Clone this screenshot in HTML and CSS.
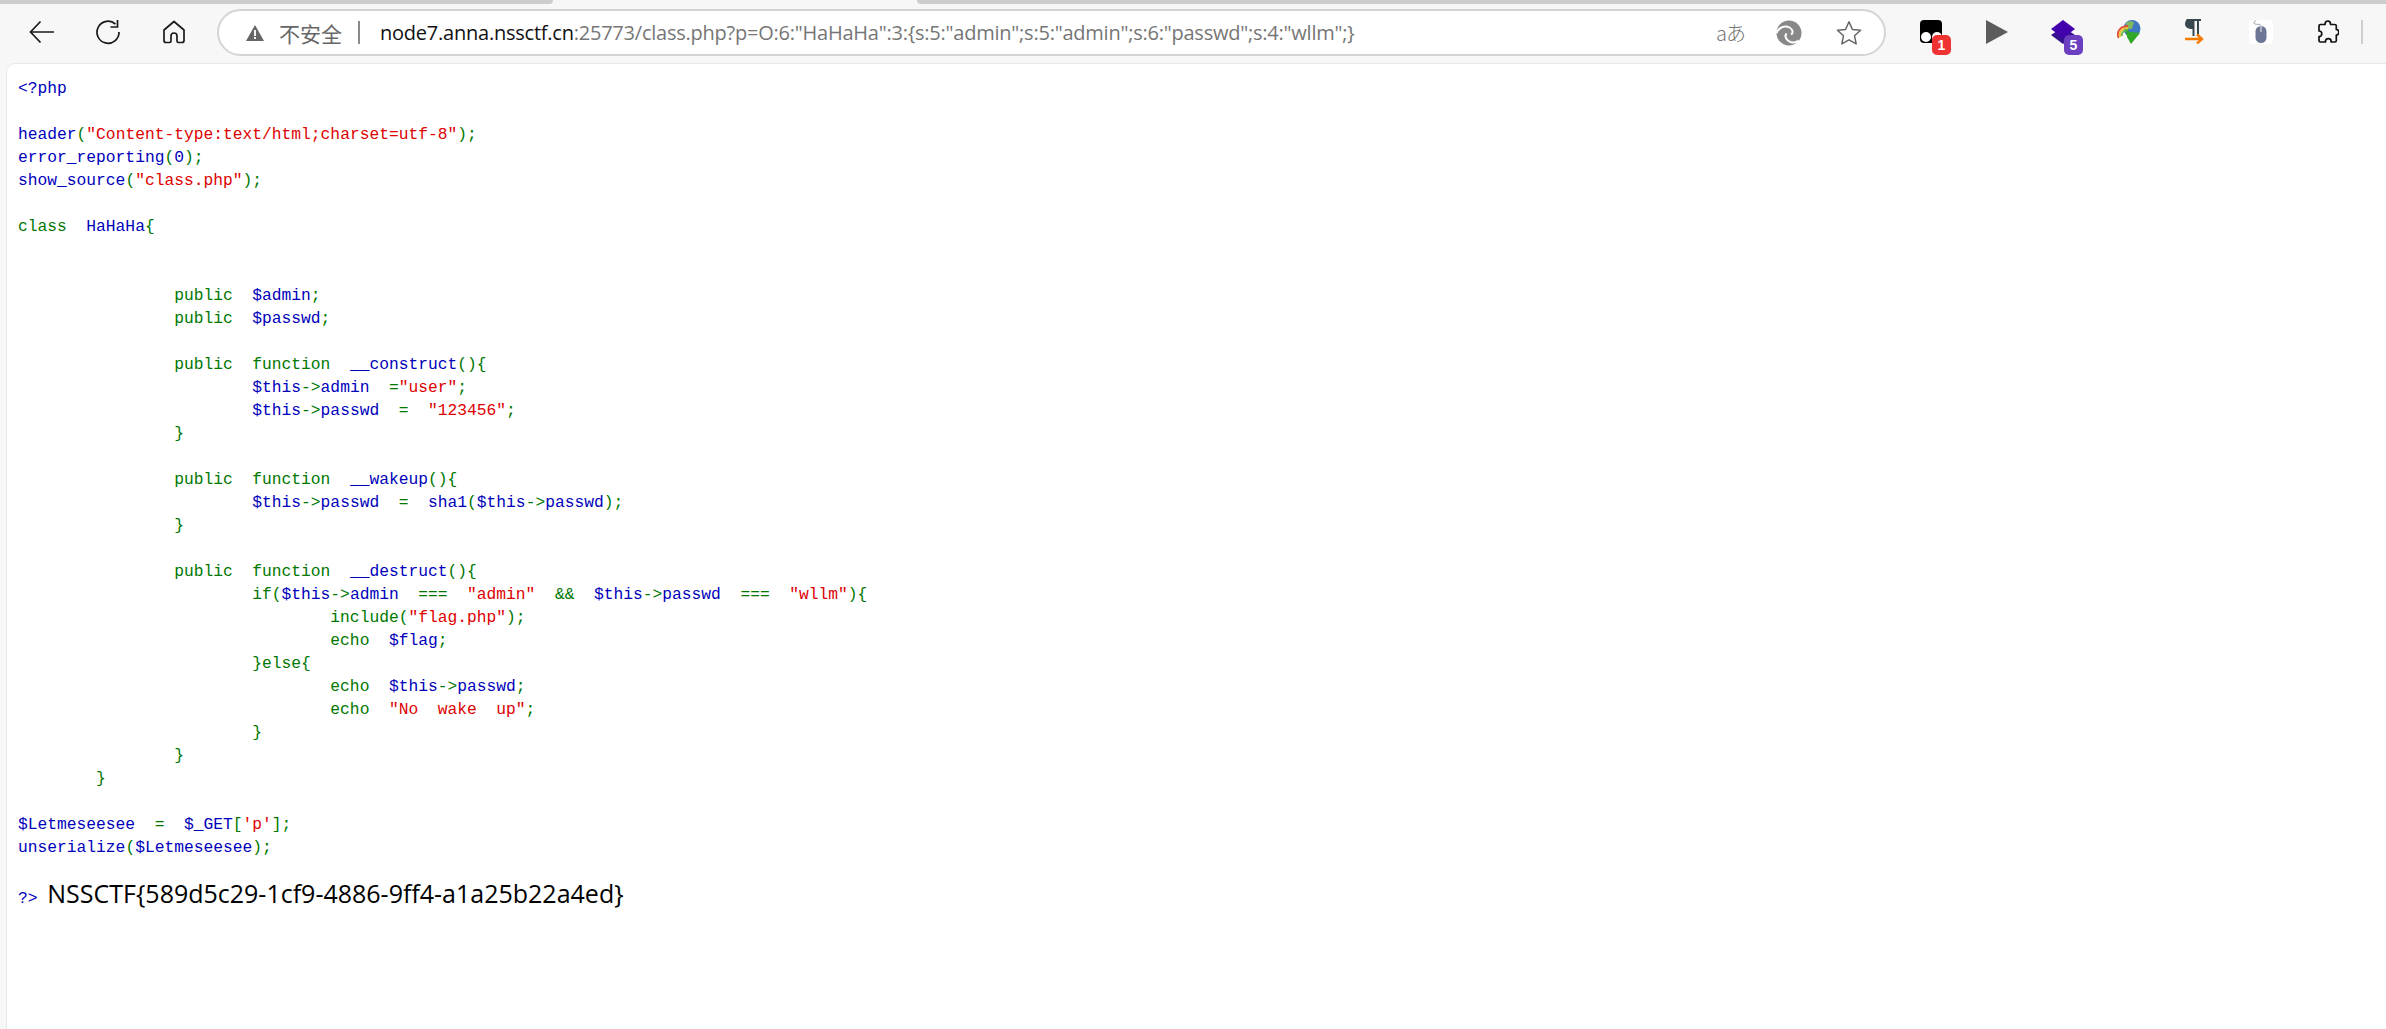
FILE: index.html
```html
<!DOCTYPE html>
<html lang="zh">
<head>
<meta charset="utf-8">
<title>class.php</title>
<link rel="stylesheet" href="styles.css">
</head>
<body>
<div class="tabstrip"><div class="tab-left"></div><div class="tab-active"></div><div class="tab-right"></div></div>
<header class="toolbar">
  <div class="btn"><svg width="26" height="24" viewBox="0 0 26 24"><path d="M25 12H2M11.500 1.500 1.500 12l10 10.500" fill="none" stroke="#1a1a1a" stroke-width="1.700"/></svg></div>
  <div class="btn"><svg width="26" height="26" viewBox="0 0 26 26"><path d="M20.500 5.200A11 11 0 1 0 24 13" fill="none" stroke="#1a1a1a" stroke-width="1.700"/><path d="M22.500 1v7h-7" fill="none" stroke="#1a1a1a" stroke-width="1.700"/></svg></div>
  <div class="btn"><svg width="24" height="24" viewBox="0 0 24 24"><path d="M12 1.500 2 10v10.500a2 2 0 0 0 2 2h3.500a1.500 1.500 0 0 0 1.500-1.500v-5a3 3 0 0 1 6 0v5a1.500 1.500 0 0 0 1.500 1.500H20a2 2 0 0 0 2-2V10z" fill="none" stroke="#1a1a1a" stroke-width="1.700" stroke-linejoin="round"/></svg></div>
  <div class="omnibox">
    <svg class="warn" width="18" height="16" viewBox="0 0 18 16"><path d="M9 0 18 16H0z" fill="#666"/><path d="M8 5h2v6H8zM8 12h2v2H8z" fill="#f4f4f4"/></svg>
    <span class="insecure">不安全</span>
    <span class="divider"></span>
    <span class="url"><span class="host">node7.anna.nssctf.cn</span>:25773/class.php?p=O:6:"HaHaHa":3:{s:5:"admin";s:5:"admin";s:6:"passwd";s:4:"wllm";}</span>
    <div class="omni-actions">
      <span class="translate">aあ</span>
      <svg width="26" height="26" viewBox="0 0 26 26"><circle cx="13" cy="13" r="12.500" fill="#888"/><path d="M.5 13C3 7 9 5 13.500 7.500c3.500 2 4 5.500 1.500 7" fill="none" stroke="#fff" stroke-width="2"/><path d="M10.500 13.500c-2.500 3 0 7 4 8.500 3 1 6 .5 8-1.500" fill="none" stroke="#fff" stroke-width="2"/></svg>
      <svg width="26" height="26" viewBox="0 0 26 26"><path d="M13 1.800l3.400 7.600 8.200.9-6.100 5.500 1.700 8.100-7.200-4.100-7.200 4.100 1.700-8.100-6.100-5.500 8.200-.9z" fill="none" stroke="#666" stroke-width="1.500" stroke-linejoin="round"/></svg>
    </div>
  </div>
  <div class="extensions">
    <div class="btn"><svg width="22" height="23" viewBox="0 0 22 23"><rect width="22" height="23" rx="4" fill="#000"/><circle cx="6" cy="17" r="5" fill="#fff"/><circle cx="17" cy="17" r="5" fill="#fff"/></svg><span class="badge badge-red">1</span></div>
    <div class="btn"><svg width="22" height="24" viewBox="0 0 22 24"><path d="M0 0 22 12 0 24z" fill="#5c5c5c"/></svg></div>
    <div class="btn"><svg width="24" height="24" viewBox="0 0 24 24"><path d="M12 7 24 15 12 24 0 15z" fill="#36108e"/><path d="M12 0 24 9 12 18 0 9z" fill="#4300ad"/></svg><span class="badge badge-purple">5</span></div>
    <div class="btn"><svg width="24" height="24" viewBox="0 0 24 24"><circle cx="15" cy="8.500" r="8.500" fill="#3d78c0"/><path d="M9 3c3-2.500 6-2 8-.5l-2 6-5 1z" fill="#84b860"/><path d="M1.500 18C-1 11 4 6 11 6" fill="none" stroke="#e2503c" stroke-width="1.800"/><path d="M3.300 17C1.500 12 5 8 11 8" fill="none" stroke="#f2c42e" stroke-width="1.800"/><path d="M5 16C4 13 7 10 11 10" fill="none" stroke="#63b84a" stroke-width="1.800"/><path d="M9 10l4 2 10 1-9 11-4-7z" fill="#32a829"/></svg></div>
    <div class="btn"><svg width="20" height="25" viewBox="0 0 20 25"><path d="M2 0H16V2H14V17H12V2H9.500V17H7.500V10C3 10 0 8 0 5S2 0 2 0z" fill="#37474f"/><path d="M0 20H16M12 15.500 17 20 12 24.500" fill="none" stroke="#f57c00" stroke-width="2.400"/></svg></div>
    <div class="btn"><span class="mouse-tile"><svg width="24" height="24" viewBox="0 0 24 24"><path d="M12 7C12 3 9 5 6 4 4 3 5 1 7 1" fill="none" stroke="#8d95a5" stroke-width=".9"/><rect x="6.500" y="6" width="11" height="17" rx="5.500" fill="#6d7793"/><path d="M12 6v6" stroke="#f4f4f4"/></svg></span></div>
    <div class="btn"><svg width="23" height="24" viewBox="0 0 23 24"><path d="M9 4.500C9 2.500 10.300 1 11.800 1s2.800 1.500 2.800 3.500h4.200a1.500 1.500 0 0 1 1.500 1.500v3.500c1.500 0 2.500 1.200 2.500 2.800s-1 2.800-2.500 2.800v5.400a1.500 1.500 0 0 1-1.500 1.500h-3.600c0-2-1.100-3.300-2.800-3.300s-3 1.300-3 3.300H4.500A1.500 1.500 0 0 1 3 20.500v-4c1.500 0 2.800-1 2.800-2.700S4.500 11 3 11V6a1.500 1.500 0 0 1 1.500-1.500z" fill="none" stroke="#111" stroke-width="1.700" stroke-linejoin="round"/></svg></div>
  </div>
  <span class="toolbar-sep"></span>
</header>
<main class="page">
<pre class="code"><span class="d">&lt;?php</span>

<span class="d">header</span><span class="k">(</span><span class="s">"Content-type:text/html;charset=utf-8"</span><span class="k">);</span>
<span class="d">error_reporting</span><span class="k">(</span><span class="d">0</span><span class="k">);</span>
<span class="d">show_source</span><span class="k">(</span><span class="s">"class.php"</span><span class="k">);</span>

<span class="k">class  </span><span class="d">HaHaHa</span><span class="k">{</span>


<span class="k">                public  </span><span class="d">$admin</span><span class="k">;</span>
<span class="k">                public  </span><span class="d">$passwd</span><span class="k">;</span>

<span class="k">                public  function  </span><span class="d">__construct</span><span class="k">(){</span>
                        <span class="d">$this</span><span class="k">-&gt;</span><span class="d">admin  </span><span class="k">=</span><span class="s">"user"</span><span class="k">;</span>
                        <span class="d">$this</span><span class="k">-&gt;</span><span class="d">passwd  </span><span class="k">=  </span><span class="s">"123456"</span><span class="k">;</span>
<span class="k">                }</span>

<span class="k">                public  function  </span><span class="d">__wakeup</span><span class="k">(){</span>
                        <span class="d">$this</span><span class="k">-&gt;</span><span class="d">passwd  </span><span class="k">=  </span><span class="d">sha1</span><span class="k">(</span><span class="d">$this</span><span class="k">-&gt;</span><span class="d">passwd</span><span class="k">);</span>
<span class="k">                }</span>

<span class="k">                public  function  </span><span class="d">__destruct</span><span class="k">(){</span>
<span class="k">                        if(</span><span class="d">$this</span><span class="k">-&gt;</span><span class="d">admin  </span><span class="k">===  </span><span class="s">"admin"  </span><span class="k">&amp;&amp;  </span><span class="d">$this</span><span class="k">-&gt;</span><span class="d">passwd  </span><span class="k">===  </span><span class="s">"wllm"</span><span class="k">){</span>
<span class="k">                                include(</span><span class="s">"flag.php"</span><span class="k">);</span>
<span class="k">                                echo  </span><span class="d">$flag</span><span class="k">;</span>
<span class="k">                        }else{</span>
<span class="k">                                echo  </span><span class="d">$this</span><span class="k">-&gt;</span><span class="d">passwd</span><span class="k">;</span>
<span class="k">                                echo  </span><span class="s">"No  wake  up"</span><span class="k">;</span>
<span class="k">                        }</span>
<span class="k">                }</span>
<span class="k">        }</span>

<span class="d">$Letmeseesee  </span><span class="k">=  </span><span class="d">$_GET</span><span class="k">[</span><span class="s">'p'</span><span class="k">];</span>
<span class="d">unserialize</span><span class="k">(</span><span class="d">$Letmeseesee</span><span class="k">);</span>

<span class="d">?&gt;</span> <span class="flag">NSSCTF{589d5c29-1cf9-4886-9ff4-a1a25b22a4ed}</span></pre>
</main>
</body>
</html>
```
FILE: styles.css
```css
* { box-sizing: border-box; }
html, body { height: 100%; }
body {
  margin: 0;
  background: #f7f7f7;
  display: flex;
  flex-direction: column;
  overflow: hidden;
  font-family: "Open Sans", "Noto Sans CJK SC", sans-serif;
}
.tabstrip { display: flex; height: 4px; flex: none; }
.tab-left { width: 553px; background: #cccccc; border-bottom-right-radius: 4px; }
.tab-active { width: 364px; background: #f7f7f7; }
.tab-right { flex: 1; background: #cccccc; border-bottom-left-radius: 4px; }
.toolbar {
  flex: none;
  height: 59px;
  display: flex;
  align-items: center;
  padding-left: 9px;
  padding-bottom: 4px;
}
.btn {
  position: relative;
  width: 66px;
  height: 40px;
  flex: none;
  display: flex;
  align-items: center;
  justify-content: center;
}
.omnibox {
  flex: none;
  width: 1669px;
  height: 47px;
  margin: 2px 0 0 10px;
  background: #fff;
  border: 2px solid #d4d4d4;
  border-radius: 24px;
  display: flex;
  align-items: center;
  padding: 0 22px 0 27px;
}
.warn { flex: none; }
.insecure {
  margin-left: 15px;
  font-size: 21px;
  color: #666;
  font-family: "Noto Sans CJK SC", sans-serif;
  width: 63px;
  white-space: nowrap;
}
.divider { width: 2px; height: 23px; background: #8a8a8a; margin: 0 20px 0 16px; flex: none; }
.url { font-size: 20px; color: #767676; white-space: nowrap; letter-spacing: -0.23px; flex: none; }
.host { color: #111; }
.omni-actions {
  margin-left: auto;
  display: flex;
  align-items: center;
  gap: 34px;
}
.translate { font-size: 20px; color: #777; width: 26px; text-align: center; font-family: "Noto Sans CJK JP", sans-serif; font-weight: 300; letter-spacing: -1px; white-space: nowrap; }
.extensions { display: flex; margin-left: 12px; flex: none; }
.badge {
  position: absolute;
  left: 34px;
  top: 23px;
  width: 19px;
  height: 20px;
  border-radius: 5px;
  color: #fff;
  font-size: 14px;
  font-weight: 600;
  line-height: 20px;
  text-align: center;
  font-family: "Liberation Sans", sans-serif;
}
.badge-red { background: #ef3232; }
.badge-purple { background: #6b3fc0; }
.mouse-tile { background: #fff; border-radius: 4px; width: 24px; height: 24px; display: block; }
.toolbar-sep { width: 2px; height: 24px; background: #cfcfcf; flex: none; margin-left: 1px; }
.page {
  flex: 1;
  margin-left: 6px;
  background: #fff;
  border-top: 1px solid #e8e8e8;
  border-left: 1px solid #e8e8e8;
  border-top-left-radius: 9px;
  padding: 13px 0 0 11px;
  min-height: 0;
}
.code {
  margin: 0;
  font-family: "Liberation Mono", monospace;
  font-size: 16.27px;
  line-height: 23px;
  white-space: pre;
}
.d { color: #0000bb; }
.k { color: #007700; }
.s { color: #dd0000; }
.flag { font-family: "Open Sans", sans-serif; font-size: 25px; color: #000; }
```
